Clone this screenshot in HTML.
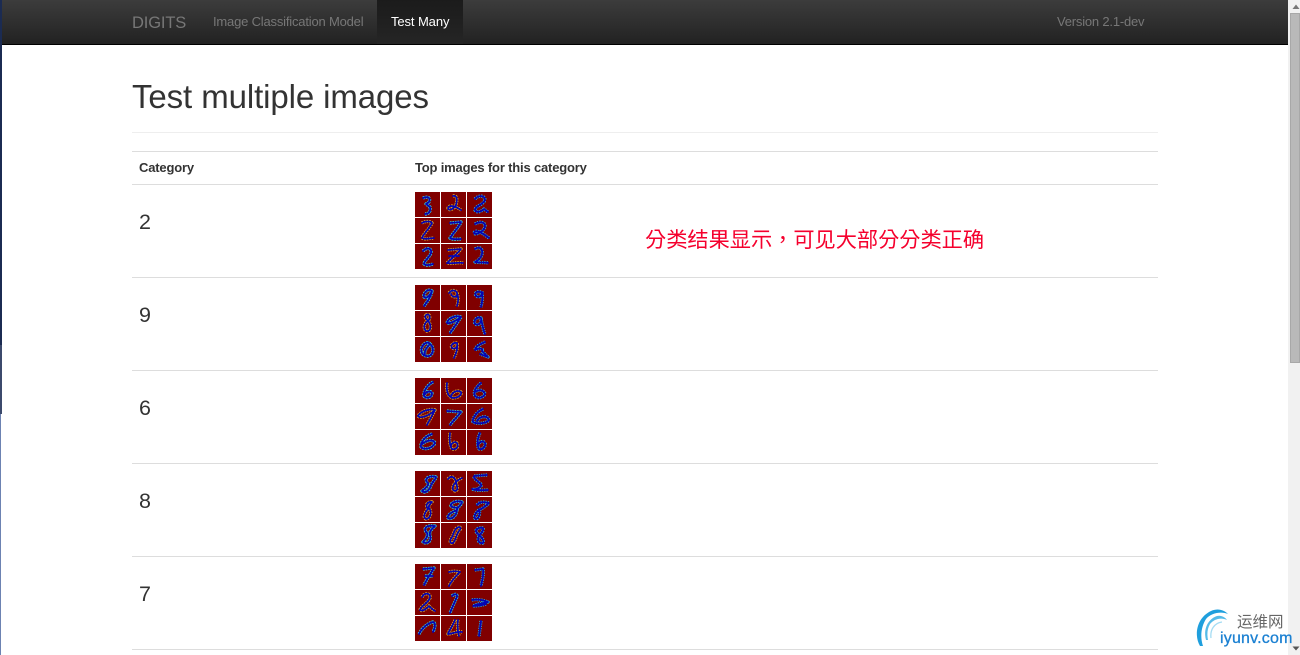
<!DOCTYPE html>
<html><head><meta charset="utf-8"><title>DIGITS</title>
<style>
*{box-sizing:border-box}
html,body{margin:0;padding:0;width:1300px;height:655px;overflow:hidden;background:#fff;font-family:"Liberation Sans","Noto Sans CJK SC",sans-serif;color:#333}
.abs{position:absolute}
#nav{left:2px;top:0;width:1286px;height:45px;background:linear-gradient(#3c3c3c,#222);border-bottom:1px solid #000}
#active{left:377px;top:0;width:86px;height:44px;background:linear-gradient(#1b1b1b,#252525)}
.t{position:absolute;white-space:nowrap}
.line{position:absolute;left:132px;width:1026px;height:1px;background:#ddd}
.num{position:absolute;left:139px;font-size:21.500px;line-height:24px;color:#333}
svg.th{position:absolute;left:415px;width:77px;height:77px}
svg.th .a{fill:none;stroke:#30d8e8;stroke-width:3.200;stroke-linecap:butt;stroke-linejoin:round;stroke-dasharray:1.700 .8}
svg.th .a:nth-of-type(4n){stroke:#e0c030;stroke-dasharray:1.500 .9}
svg.th .a:nth-of-type(6n){stroke:#20c0f0;stroke-dasharray:1.300 1}
svg.th .b{fill:none;stroke:#0404b4;stroke-width:1.800;stroke-linecap:round;stroke-linejoin:round}
</style></head><body>
<div class="abs" style="left:0;top:0;width:2px;height:345px;background:#1b2b52"></div>
<div class="abs" style="left:0;top:345px;width:2px;height:69px;background:#3c4a6c"></div>
<div class="abs" style="left:0;top:414px;width:1px;height:241px;background:#6c82b2"></div>

<div id="nav" class="abs"></div>
<div id="active" class="abs"></div>
<div class="t" style="left:132px;top:13px;font-size:16.500px;line-height:20px;color:#777;letter-spacing:-.15px">DIGITS</div>
<div class="t" style="left:213px;top:14px;font-size:13px;line-height:16px;color:#777;letter-spacing:-.19px">Image Classification Model</div>
<div class="t" style="left:391px;top:14px;font-size:13px;line-height:16px;color:#fff;letter-spacing:-.1px">Test Many</div>
<div class="t" style="left:1057px;top:14px;font-size:13px;line-height:16px;color:#777;letter-spacing:-.2px">Version 2.1-dev</div>

<div class="t" style="left:132px;top:77px;font-size:33px;line-height:40px;color:#333;letter-spacing:-.1px">Test multiple images</div>
<div class="line" style="top:132px;background:#eee"></div>
<div class="line" style="top:151px"></div>
<div class="t" style="left:139px;top:160px;font-size:13px;line-height:16px;font-weight:bold;letter-spacing:-.18px">Category</div>
<div class="t" style="left:415px;top:160px;font-size:13px;line-height:16px;font-weight:bold;letter-spacing:-.18px">Top images for this category</div>
<div class="line" style="top:184px"></div>
<div class="line" style="top:277px"></div>
<div class="line" style="top:370px"></div>
<div class="line" style="top:463px"></div>
<div class="line" style="top:556px"></div>
<div class="line" style="top:649px"></div>
<div class="num" style="top:210px">2</div>
<div class="num" style="top:303px">9</div>
<div class="num" style="top:396px">6</div>
<div class="num" style="top:489px">8</div>
<div class="num" style="top:582px">7</div>
<div class="t" style="left:645px;top:227px;font-size:21.200px;line-height:28px;color:#f5002d;font-family:'Liberation Sans','Noto Sans CJK TC',sans-serif">分类结果显示，可见大部分分类正确</div>

<svg class="th" style="top:192px" viewBox="0 0 77 77">
<path fill="#800000" d="M0 0h25v25H0zM26 0h25v25H26zM52 0h25v25H52zM0 26h25v25H0zM26 26h25v25H26zM52 26h25v25H52zM0 52h25v25H0zM26 52h25v25H26zM52 52h25v25H52z"/>
<path class="a" d="M8 6C13 4 16 6 14 10L11 12L15 15C16 19 14 22 10 22"/><path class="b" d="M8 6C13 4 16 6 14 10L11 12L15 15C16 19 14 22 10 22"/>
<path class="a" d="M38 4C43 3 42 9 41 13C38 18 33 19 33 16C34 13 38 14 41 15L46 18"/><path class="b" d="M38 4C43 3 42 9 41 13C38 18 33 19 33 16C34 13 38 14 41 15L46 18"/>
<path class="a" d="M60 7C63 3 70 3 70 8C68 13 60 14 60 18C61 21 66 20 69 17L73 20"/><path class="b" d="M60 7C63 3 70 3 70 8C68 13 60 14 60 18C61 21 66 20 69 17L73 20"/>
<path class="a" d="M7 31C10 29 16 29 17 31C15 36 9 41 7 46C10 48 15 46 19 46"/><path class="b" d="M7 31C10 29 16 29 17 31C15 36 9 41 7 46C10 48 15 46 19 46"/>
<path class="a" d="M35 31L46 30C44 35 38 41 35 46C38 48 42 47 46 47"/><path class="b" d="M35 31L46 30C44 35 38 41 35 46C38 48 42 47 46 47"/>
<path class="a" d="M60 32C65 29 70 30 70 34C70 39 60 44 59 41C60 37 66 40 74 46"/><path class="b" d="M60 32C65 29 70 30 70 34C70 39 60 44 59 41C60 37 66 40 74 46"/>
<path class="a" d="M8 59C12 55 17 56 16 61C14 66 9 69 9 72C11 74 15 73 18 72"/><path class="b" d="M8 59C12 55 17 56 16 61C14 66 9 69 9 72C11 74 15 73 18 72"/>
<path class="a" d="M33 58L46 57C42 62 36 67 32 71C37 72 43 70 48 71"/><path class="b" d="M33 58L46 57C42 62 36 67 32 71C37 72 43 70 48 71M34 64H44"/>
<path class="a" d="M60 57C65 54 68 57 67 62C66 67 62 69 60 70C64 71 69 70 73 71"/><path class="b" d="M60 57C65 54 68 57 67 62C66 67 62 69 60 70C64 71 69 70 73 71"/>
</svg>

<svg class="th" style="top:285px" viewBox="0 0 77 77">
<path fill="#800000" d="M0 0h25v25H0zM26 0h25v25H26zM52 0h25v25H52zM0 26h25v25H0zM26 26h25v25H26zM52 26h25v25H52zM0 52h25v25H0zM26 52h25v25H26zM52 52h25v25H52z"/>
<path class="a" d="M17 6C13 3 8 8 9 12C11 14 15 11 17 6C16 12 12 17 9 21"/><path class="b" d="M17 6C13 3 8 8 9 12C11 14 15 11 17 6C16 12 12 17 9 21"/>
<path class="a" d="M34 8C37 4 43 5 42 10C41 13 37 12 36 9M42 8C44 13 43 18 42 21"/><path class="b" d="M34 8C37 4 43 5 42 10C41 13 37 12 36 9M42 8C44 13 43 18 42 21"/>
<path class="a" d="M68 8C62 5 59 8 61 11C64 13 67 11 67 7C68 12 67 18 66 22"/><path class="b" d="M68 8C62 5 59 8 61 11C64 13 67 11 67 7C68 12 67 18 66 22"/>
<path class="a" d="M11 30C15 28 16 33 13 36C9 38 8 43 11 46C15 47 17 42 14 37C11 34 9 32 11 30Z"/><path class="b" d="M11 30C15 28 16 33 13 36C9 38 8 43 11 46C15 47 17 42 14 37C11 34 9 32 11 30Z"/>
<path class="a" d="M46 32C41 30 33 33 32 38C35 39 41 36 46 32C42 38 38 44 35 48"/><path class="b" d="M46 32C41 30 33 33 32 38C35 39 41 36 46 32C42 38 38 44 35 48"/>
<path class="a" d="M66 33C62 31 58 36 60 39C63 41 67 38 66 33C67 39 68 44 70 49"/><path class="b" d="M66 33C62 31 58 36 60 39C63 41 67 38 66 33C67 39 68 44 70 49"/>
<path class="a" d="M15 59C19 62 19 69 14 71C8 72 5 67 7 62C9 58 13 56 15 59C11 63 9 67 10 70"/><path class="b" d="M15 59C19 62 19 69 14 71C8 72 5 67 7 62C9 58 13 56 15 59C11 63 9 67 10 70"/>
<path class="a" d="M42 58C38 57 35 61 37 63C40 65 43 62 42 58C43 63 41 69 39 73"/><path class="b" d="M42 58C38 57 35 61 37 63C40 65 43 62 42 58C43 63 41 69 39 73"/>
<path class="a" d="M70 57C65 59 60 62 60 65C63 63 69 63 67 66L73 72L65 69"/><path class="b" d="M70 57C65 59 60 62 60 65C63 63 69 63 67 66L73 72L65 69"/>
</svg>

<svg class="th" style="top:378px" viewBox="0 0 77 77">
<path fill="#800000" d="M0 0h25v25H0zM26 0h25v25H26zM52 0h25v25H52zM0 26h25v25H0zM26 26h25v25H26zM52 26h25v25H52zM0 52h25v25H0zM26 52h25v25H26zM52 52h25v25H52z"/>
<path class="a" d="M18 4C12 7 8 14 9 18C11 21 17 20 17 15C15 12 11 14 9 17"/><path class="b" d="M18 4C12 7 8 14 9 18C11 21 17 20 17 15C15 12 11 14 9 17"/>
<path class="a" d="M32 5C31 13 33 19 38 20C43 20 47 17 46 14C43 12 38 13 36 18"/><path class="b" d="M32 5C31 13 33 19 38 20C43 20 47 17 46 14C43 12 38 13 36 18"/>
<path class="a" d="M66 5C61 9 58 14 60 18C63 21 68 20 70 16C69 12 64 11 60 14"/><path class="b" d="M66 5C61 9 58 14 60 18C63 21 68 20 70 16C69 12 64 11 60 14"/>
<path class="a" d="M20 32C14 30 5 34 3 38C5 41 14 38 20 32C17 38 14 43 12 47"/><path class="b" d="M20 32C14 30 5 34 3 38C5 41 14 38 20 32C17 38 14 43 12 47"/>
<path class="a" d="M32 33L46 34C43 38 37 44 35 47"/><path class="b" d="M32 33L46 34C43 38 37 44 35 47"/>
<path class="a" d="M68 31C61 34 57 41 58 44C61 46 71 46 74 42C72 37 65 38 62 43"/><path class="b" d="M68 31C61 34 57 41 58 44C61 46 71 46 74 42C72 37 65 38 62 43"/>
<path class="a" d="M17 56C10 58 5 65 6 69C9 72 17 71 20 65C18 61 12 62 7 66"/><path class="b" d="M17 56C10 58 5 65 6 69C9 72 17 71 20 65C18 61 12 62 7 66"/>
<path class="a" d="M35 55C34 62 35 69 37 71C41 72 44 69 42 65C40 63 36 65 36 68"/><path class="b" d="M35 55C34 62 35 69 37 71C41 72 44 69 42 65C40 63 36 65 36 68"/>
<path class="a" d="M65 55C62 61 62 68 64 71C68 72 71 68 70 65C68 62 64 64 63 67"/><path class="b" d="M65 55C62 61 62 68 64 71C68 72 71 68 70 65C68 62 64 64 63 67"/>
</svg>

<svg class="th" style="top:471px" viewBox="0 0 77 77">
<path fill="#800000" d="M0 0h25v25H0zM26 0h25v25H26zM52 0h25v25H52zM0 26h25v25H0zM26 26h25v25H26zM52 26h25v25H52zM0 52h25v25H0zM26 52h25v25H26zM52 52h25v25H52z"/>
<path class="a" d="M21 6C14 4 9 8 12 11C15 13 12 16 7 20C10 23 15 19 16 14C18 10 21 8 21 6Z"/><path class="b" d="M21 6C14 4 9 8 12 11C15 13 12 16 7 20C10 23 15 19 16 14C18 10 21 8 21 6Z"/>
<path class="a" d="M33 8C36 4 40 6 41 11C42 16 44 19 40 20C36 19 38 14 41 11C43 9 45 8 47 7"/><path class="b" d="M33 8C36 4 40 6 41 11C42 16 44 19 40 20C36 19 38 14 41 11C43 9 45 8 47 7"/>
<path class="a" d="M72 4L59 5C58 9 68 12 66 15C64 18 59 19 57 18C62 20 68 19 73 19"/><path class="b" d="M72 4L59 5C58 9 68 12 66 15C64 18 59 19 57 18C62 20 68 19 73 19"/>
<path class="a" d="M17 31C12 30 10 35 13 38C9 42 8 47 11 48C16 47 17 41 14 37C13 35 15 33 17 31Z"/><path class="b" d="M17 31C12 30 10 35 13 38C9 42 8 47 11 48C16 47 17 41 14 37C13 35 15 33 17 31Z"/>
<path class="a" d="M47 31C41 29 35 32 36 35C39 38 44 35 42 39C37 41 32 44 33 47C38 49 42 43 42 38C44 35 47 33 47 31Z"/><path class="b" d="M47 31C41 29 35 32 36 35C39 38 44 35 42 39C37 41 32 44 33 47C38 49 42 43 42 38C44 35 47 33 47 31Z"/>
<path class="a" d="M62 34C65 30 70 31 74 32C70 36 66 38 64 39C60 42 58 47 61 48C65 47 65 41 64 38"/><path class="b" d="M62 34C65 30 70 31 74 32C70 36 66 38 64 39C60 42 58 47 61 48C65 47 65 41 64 38"/>
<path class="a" d="M20 55C13 54 8 56 11 61C14 63 12 67 8 71C12 74 17 70 15 64C14 60 17 58 20 55Z"/><path class="b" d="M20 55C13 54 8 56 11 61C14 63 12 67 8 71C12 74 17 70 15 64C14 60 17 58 20 55Z"/>
<path class="a" d="M44 56C39 57 39 63 37 66C34 70 35 73 38 72C41 69 41 64 44 60C46 58 46 56 44 56Z"/><path class="b" d="M44 56C39 57 39 63 37 66C34 70 35 73 38 72C41 69 41 64 44 60C46 58 46 56 44 56Z"/>
<path class="a" d="M68 57C63 56 59 59 62 62C65 65 70 69 68 72C64 73 62 69 64 65C66 62 69 60 68 57Z"/><path class="b" d="M68 57C63 56 59 59 62 62C65 65 70 69 68 72C64 73 62 69 64 65C66 62 69 60 68 57Z"/>
</svg>

<svg class="th" style="top:564px" viewBox="0 0 77 77">
<path fill="#800000" d="M0 0h25v25H0zM26 0h25v25H26zM52 0h25v25H52zM0 26h25v25H0zM26 26h25v25H26zM52 26h25v25H52zM0 52h25v25H0zM26 52h25v25H26zM52 52h25v25H52z"/>
<path class="a" d="M8 5L19 4C16 9 12 15 9 21M10 12H18"/><path class="b" d="M8 5L19 4C16 9 12 15 9 21M10 12H18"/>
<path class="a" d="M34 8C38 7 42 7 45 8C41 12 36 17 34 22"/><path class="b" d="M34 8C38 7 42 7 45 8C41 12 36 17 34 22"/>
<path class="a" d="M60 6L68 5C69 11 67 17 66 22"/><path class="b" d="M60 6L68 5C69 11 67 17 66 22"/>
<path class="a" d="M7 33C10 28 16 29 15 34C13 39 5 43 5 46C8 48 12 44 14 42C16 44 18 46 20 47"/><path class="b" d="M7 33C10 28 16 29 15 34C13 39 5 43 5 46C8 48 12 44 14 42C16 44 18 46 20 47"/>
<path class="a" d="M37 32C40 29 44 30 41 35C39 40 36 46 35 49"/><path class="b" d="M37 32C40 29 44 30 41 35C39 40 36 46 35 49"/>
<path class="a" d="M57 36C62 35 68 36 73 38C68 39 62 40 58 42C63 42 68 41 71 40"/><path class="b" d="M57 36C62 35 68 36 73 38C68 39 62 40 58 42C63 42 68 41 71 40"/>
<path class="a" d="M4 70C7 64 13 59 18 58C21 59 20 64 18 68"/><path class="b" d="M4 70C7 64 13 59 18 58C21 59 20 64 18 68"/>
<path class="a" d="M40 56C38 62 34 66 33 70C37 70 42 67 47 68M43 56C42 62 43 68 44 72"/><path class="b" d="M40 56C38 62 34 66 33 70C37 70 42 67 47 68M43 56C42 62 43 68 44 72"/>
<path class="a" d="M66 57L64 72"/><path class="b" d="M66 57L64 72"/>
</svg>

<div class="abs" style="left:1288px;top:0;width:12px;height:655px;background:#f1f1f1"></div>
<div class="abs" style="left:1290px;top:13px;width:10px;height:350px;background:#b9b9b9;border:1px solid #a8a8a8"></div>
<svg class="abs" style="left:1288px;top:0;width:12px;height:655px" viewBox="0 0 12 655"><path fill="#777" d="M8 4.500L11.500 9H4.500Z"/><path fill="#555" d="M8 650.500L11.500 646.500H4.500Z"/></svg>

<svg class="abs" style="left:1190px;top:600px;width:50px;height:55px" viewBox="0 0 50 55" fill="none">
<path d="M10 46C4 36 6 18 21 11C28 8 34 10 38 14C31 11 21 13 16 19C11 27 10 37 13 46Z" fill="#1f9fdd"/>
<path d="M16 40C13 29 18 19 27 16C31 15 35 17 37 20C31 17 24 19 20 24C17 29 17 35 18 40Z" fill="#55bbe8"/>
<path d="M21 38C20 30 24 23 32 22" stroke="#a5dcf3" stroke-width="1.300"/>
</svg>
<div class="t" style="left:1237px;top:611px;font-size:15.500px;line-height:20px;color:#666;font-family:'Noto Sans CJK SC',sans-serif">运维网</div>
<div class="t" style="left:1220px;top:630px;font-size:16px;line-height:18px;color:#1b80d2;letter-spacing:.2px;-webkit-text-stroke:.3px #1b80d2">iyunv.com</div>
</body></html>
